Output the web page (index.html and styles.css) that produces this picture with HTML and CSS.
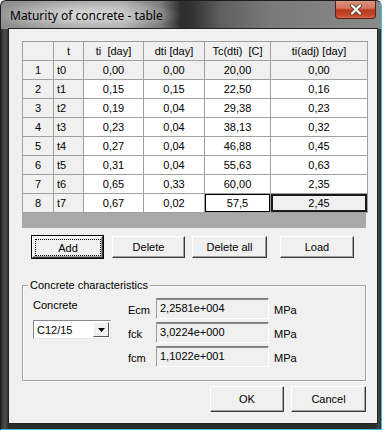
FILE: index.html
```html
<!DOCTYPE html>
<html lang="en">

<head>
    <meta charset="UTF-8">
    <title>Maturity of concrete - table</title>
    <link rel="stylesheet" href="styles.css">
</head>

<body>
    <div class="window">
        <div class="titlebar">
            <span class="title">Maturity of concrete - table</span>
            <div class="close-btn">
                <svg width="16" height="11" viewBox="0 0 16 11">
                    <path d="M4 1.5 L12 9.5 M12 1.5 L4 9.5" stroke="#6b3b30" stroke-width="4" stroke-linecap="round" />
                    <path d="M4 1.5 L12 9.5 M12 1.5 L4 9.5" stroke="#ffffff" stroke-width="2.2" stroke-linecap="round" />
                </svg>
            </div>
        </div>

        <div class="client">
            <div class="grid">
                <table class="grid-table">
                    <colgroup>
                        <col class="c-num">
                        <col class="c-t">
                        <col class="c-ti">
                        <col class="c-dti">
                        <col class="c-tc">
                        <col class="c-adj">
                    </colgroup>
                    <tr class="fixed">
                        <td></td><td>t</td><td>ti&nbsp; [day]</td><td>dti [day]</td><td>Tc(dti)&nbsp; [C]</td><td>ti(adj) [day]</td>
                    </tr>
                    <tr class="fixed">
                        <td>1</td><td class="name">t0</td><td>0,00</td><td>0,00</td><td>20,00</td><td>0,00</td>
                    </tr>
                    <tr>
                        <td class="fix">2</td><td class="fix name">t1</td><td>0,15</td><td>0,15</td><td>22,50</td><td>0,16</td>
                    </tr>
                    <tr>
                        <td class="fix">3</td><td class="fix name">t2</td><td>0,19</td><td>0,04</td><td>29,38</td><td>0,23</td>
                    </tr>
                    <tr>
                        <td class="fix">4</td><td class="fix name">t3</td><td>0,23</td><td>0,04</td><td>38,13</td><td>0,32</td>
                    </tr>
                    <tr>
                        <td class="fix">5</td><td class="fix name">t4</td><td>0,27</td><td>0,04</td><td>46,88</td><td>0,45</td>
                    </tr>
                    <tr>
                        <td class="fix">6</td><td class="fix name">t5</td><td>0,31</td><td>0,04</td><td>55,63</td><td>0,63</td>
                    </tr>
                    <tr>
                        <td class="fix">7</td><td class="fix name">t6</td><td>0,65</td><td>0,33</td><td>60,00</td><td>2,35</td>
                    </tr>
                    <tr>
                        <td class="fix">8</td><td class="fix name">t7</td><td>0,67</td><td>0,02</td><td class="edit">57,5</td><td class="current">2,45</td>
                    </tr>
                </table>
                <div class="grid-empty"></div>
            </div>

            <div class="toolbar">
                <button class="btn btn-default btn-add"><span class="focus">Add</span></button>
                <button class="btn btn-delete">Delete</button>
                <button class="btn btn-delete-all">Delete all</button>
                <button class="btn btn-load">Load</button>
            </div>

            <div class="group">
                <div class="group-title">Concrete characteristics</div>
                <div class="group-body">
                    <div class="concrete">
                        <div class="concrete-label">Concrete</div>
                        <div class="combo">
                            <span class="combo-text">C12/15</span>
                            <span class="combo-arrow">
                                <svg width="7" height="4" viewBox="0 0 7 4"><path d="M0 0 H7 L3.5 4 Z" fill="#000" /></svg>
                            </span>
                        </div>
                    </div>
                    <div class="props">
                        <span class="prop-label">Ecm</span>
                        <div class="field">2,2581e+004</div>
                        <span class="unit">MPa</span>
                        <span class="prop-label">fck</span>
                        <div class="field">3,0224e+000</div>
                        <span class="unit">MPa</span>
                        <span class="prop-label">fcm</span>
                        <div class="field">1,1022e+001</div>
                        <span class="unit">MPa</span>
                    </div>
                </div>
            </div>

            <div class="dialog-buttons">
                <button class="btn btn-ok">OK</button>
                <button class="btn btn-cancel">Cancel</button>
            </div>
        </div>
    </div>
</body>

</html>
```

FILE: styles.css
```css
body {
    margin: 0;
    background-color: #fff;
    font-family: "Liberation Sans", Arial, sans-serif;
    font-size: 11px;
    color: #000;
}

.window {
    width: 382px;
    height: 430px;
    box-sizing: border-box;
    display: flex;
    flex-direction: column;
    padding: 0 4px 6px 8px;
    border: 1px solid #1c1c1c;
    border-right-color: #37c3ee;
    border-bottom-color: #37c3ee;
    border-radius: 6px 6px 0 0;
    background:
        radial-gradient(ellipse 95px 16px at 85px 14px, rgba(235, 235, 235, 0.85), rgba(235, 235, 235, 0) 100%),
        linear-gradient(to right, #8e8e8e 0, #a9a9a9 120px, #7c7c7c 160px, #2e2e2e 180px, #333 192px, #5f5f5f 220px, #7a7a7a 270px, #8a8a8a 100%) 0 0 / 100% 28px no-repeat,
        linear-gradient(to right, #2d2d2d 0, #4d4d4d 4px, #2a2a2a 8px, #2a2a2a 374px, #474747 378px, #2a2a2a 100%);
}

.titlebar {
    height: 28px;
    margin: 0 -4px 0 -8px;
    padding-left: 9px;
    display: flex;
    align-items: center;
}

.title {
    font-family: "Noto Sans", "Liberation Sans", sans-serif;
    font-size: 12px;
    color: #000;
    padding-top: 1px;
}

.close-btn {
    margin-left: auto;
    margin-right: 5px;
    align-self: flex-start;
    width: 41px;
    height: 18px;
    box-sizing: border-box;
    border: 1px solid #5a2419;
    border-top: none;
    border-radius: 0 0 4px 4px;
    background: linear-gradient(to bottom, #dc9582 0, #d27763 40%, #b8381c 55%, #c44a2a 85%, #d66a48 100%);
    display: flex;
    align-items: center;
    justify-content: center;
}

.client {
    flex: 1;
    background-color: #f0f0f0;
    box-shadow: 0 0 0 1px #222;
    display: flex;
    flex-direction: column;
}

/* grid */

.grid {
    margin: 12px 0 0 13px;
    width: 345px;
}

.grid-table {
    width: 345px;
    table-layout: fixed;
    border-collapse: collapse;
}

.c-num { width: 31px; }
.c-t { width: 30px; }
.c-ti { width: 60px; }
.c-dti { width: 61px; }
.c-tc { width: 66px; }
.c-adj { width: 97px; }

.grid-table td {
    height: 18px;
    padding: 0;
    border: 1px solid #a0a0a0;
    text-align: center;
    background-color: #fff;
    line-height: 18px;
}

.grid-table tr.fixed td,
.grid-table td.fix {
    background-color: #f0f0f0;
}

.grid-table td.name {
    text-align: left;
    padding-left: 3px;
}

.grid-table td.edit {
    box-shadow: inset 0 0 0 1px #000;
}

.grid-table td.current {
    background-color: #f0f0f0;
    box-shadow: inset 0 0 0 2px #1a1a1a;
}

.grid-empty {
    height: 15px;
    width: 344px;
    background-color: #a8a8a8;
}

/* buttons */

.btn {
    height: 22px;
    padding: 0;
    box-sizing: border-box;
    font-family: inherit;
    font-size: 11px;
    color: #000;
    background-color: #f0f0f0;
    border: 1px solid;
    border-color: #fff #3a3a3a #3a3a3a #fff;
    box-shadow: inset -1px -1px #a0a0a0;
    display: flex;
    align-items: center;
    justify-content: center;
}

.btn-default {
    outline: 1px solid #000;
    outline-offset: 0;
    border-color: #fff #3a3a3a #3a3a3a #fff;
}

.focus {
    flex: 1;
    align-self: stretch;
    margin: 2px 1px 1px 2px;
    border: 1px dotted #000;
    display: flex;
    align-items: center;
    justify-content: center;
}

.toolbar {
    display: flex;
    margin-top: 8px;
}

.btn-add { width: 71px; margin-left: 23px; }
.btn-delete { width: 73px; margin-left: 9px; }
.btn-delete-all { width: 75px; margin-left: 7px; }
.btn-load { width: 74px; margin-left: 13px; }

/* group box */

.group {
    margin: 27px 11px 0 13px;
    border: 1px solid #a0a0a0;
    box-shadow: inset 1px 1px #fff, 1px 1px #fff;
    padding-bottom: 13px;
}

.group-title {
    width: fit-content;
    margin: -7px 0 0 5px;
    padding: 0 2px;
    line-height: 13px;
    background-color: #f0f0f0;
}

.group-body {
    display: flex;
    padding-top: 6px;
}

.concrete {
    width: 95px;
    padding-left: 10px;
}

.concrete-label {
    margin-top: 1px;
    line-height: 13px;
}

.combo {
    margin-top: 8px;
    width: 78px;
    height: 19px;
    box-sizing: border-box;
    border: 1px solid;
    border-color: #8a8a8a #e8e8e8 #e8e8e8 #8a8a8a;
    background-color: #fff;
    display: flex;
    align-items: center;
}

.combo-text {
    flex: 1;
    padding-left: 3px;
}

.combo-arrow {
    width: 16px;
    height: 15px;
    margin-right: 1px;
    box-sizing: border-box;
    background-color: #f0f0f0;
    border: 1px solid;
    border-color: #fff #555 #555 #fff;
    display: flex;
    align-items: center;
    justify-content: center;
}

.props {
    display: grid;
    grid-template-columns: 28px 113px auto;
    grid-auto-rows: 21px;
    row-gap: 3px;
    align-items: center;
}

.field {
    height: 21px;
    box-sizing: border-box;
    border: 1px solid;
    border-color: #7a7a7a #fff #fff #a0a0a0;
    box-shadow: inset 0 1px #8a8a8a;
    background-color: #f0f0f0;
    padding: 2px 0 0 3px;
    line-height: 15px;
}

.prop-label {
    padding-top: 2px;
}

.unit {
    padding: 2px 0 0 5px;
}

.dialog-buttons {
    display: flex;
    justify-content: flex-end;
    gap: 7px;
    margin: 5px 11px 0 0;
}

.btn-ok { width: 74px; height: 26px; }
.btn-cancel { width: 75px; height: 26px; }
```
